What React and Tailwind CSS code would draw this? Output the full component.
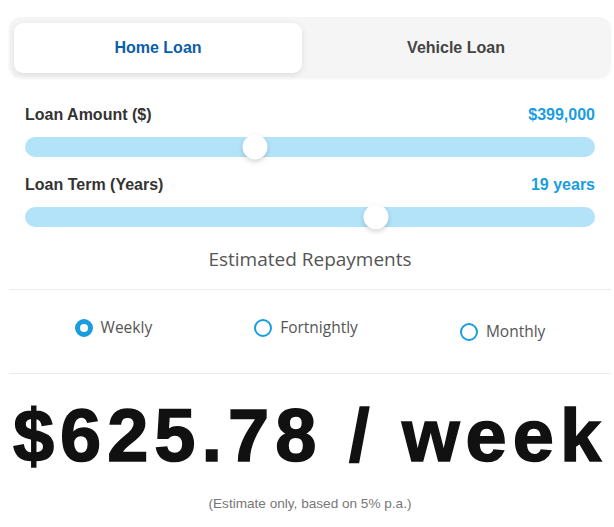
import React, { useState } from 'react';

const SANS = "font-['Liberation_Sans',Arial,sans-serif]";

const Slider = ({ label, display, pct }) => (
  <div className="px-4">
    <div className="flex items-center justify-between h-[20px]">
      <span className="text-[16px] font-bold text-[#333]">{label}</span>
      <span className="text-[16px] font-bold text-[#1a9de0]">{display}</span>
    </div>
    <div className="relative mt-[12px] h-[20px] rounded-full bg-[#b3e3f9]">
      <div
        className="absolute top-1/2 h-[25px] w-[25px] -translate-x-1/2 -translate-y-1/2 rounded-full bg-white shadow-[0_2px_5px_rgba(0,0,0,0.18)]"
        style={{ left: `calc(12px + (100% - 24px) * ${pct})` }}
      />
    </div>
  </div>
);

const Radio = ({ label, checked, onClick, className = '' }) => (
  <button onClick={onClick} className={`flex items-center gap-[8px] ${className}`}>
    <span
      className={`h-[18px] w-[18px] rounded-full border-[#1a9de0] bg-white ${checked ? 'border-[5px]' : 'border-2'}`}
    />
    <span className="font-['Open_Sans',sans-serif] text-[15.5px] text-[#555]">{label}</span>
  </button>
);

export default function App() {
  const [tab, setTab] = useState('home');
  const [freq, setFreq] = useState('weekly');

  const tabCls = (active) =>
    `h-[50px] rounded-[9px] text-[16px] font-bold ${active ? 'bg-white text-[#0b5ea8] shadow-[0_2px_6px_rgba(0,0,0,0.1)]' : 'text-[#444]'}`;

  return (
    <div className={`${SANS} min-h-screen bg-white pl-[9px] pr-[3px] pt-[17px]`}>
      {/* loan type tabs */}
      <div className="flex gap-[4px] rounded-[12px] bg-[#f5f5f5] p-[5px] pt-[6px] shadow-[0_1px_3px_rgba(0,0,0,0.04)]">
        <button onClick={() => setTab('home')} className={`w-[288px] ${tabCls(tab === 'home')}`}>
          Home Loan
        </button>
        <button onClick={() => setTab('vehicle')} className={`flex-1 ${tabCls(tab === 'vehicle')}`}>
          Vehicle Loan
        </button>
      </div>

      <div className="mt-[27px] flex flex-col gap-[18px]">
        <Slider label="Loan Amount ($)" display="$399,000" pct={0.399} />
        <Slider label="Loan Term (Years)" display="19 years" pct={0.62} />
      </div>

      <h2 className="mt-[18px] text-center font-['Open_Sans',sans-serif] text-[19px] font-medium text-[#555]">
        Estimated Repayments
      </h2>

      <div className="mt-[15px] border-t border-[#ebebeb]" />
      <div className="flex h-[83px] items-center justify-center gap-[102px] pb-[6px]">
        <Radio label="Weekly" checked={freq === 'weekly'} onClick={() => setFreq('weekly')} />
        <Radio label="Fortnightly" checked={freq === 'fortnightly'} onClick={() => setFreq('fortnightly')} />
        <Radio label="Monthly" checked={freq === 'monthly'} onClick={() => setFreq('monthly')} className="mt-[8px]" />
      </div>
      <div className="border-t border-[#ebebeb]" />

      {/* big repayment figure */}
      <div className="mt-[19px] text-center text-[74px] font-bold leading-[86px] tracking-[6px] text-[#111] [-webkit-text-stroke:1.5px_#111]">
        $625.78 / week
      </div>
      <p className="mt-[15px] text-center text-[13.6px] text-[#777]">(Estimate only, based on 5% p.a.)</p>
    </div>
  );
}
